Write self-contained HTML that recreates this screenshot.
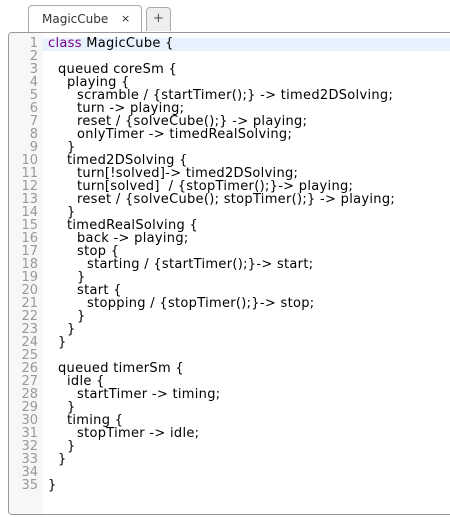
<!DOCTYPE html>
<html><head><style>
html,body{margin:0;padding:0;background:#fff;width:450px;height:517px;overflow:hidden}
body{font-family:"DejaVu Sans","Liberation Sans",sans-serif;position:relative}
.tab{position:absolute;left:28px;top:5px;width:114px;height:28px;box-sizing:border-box;border:1px solid #aaa;border-bottom:none;border-radius:4px 4px 0 0;background:#fff;font-size:12px;color:#333}
.tab span{position:absolute;left:13px;top:6px}
.tab b{position:absolute;left:92px;top:6px;font-weight:normal;font-size:11px}
.plus{position:absolute;left:146px;top:7px;width:25px;height:24px;box-sizing:border-box;border:1px solid #aaa;border-bottom:none;border-radius:4px 4px 0 0;background:#eee;font-size:13px;color:#555;text-align:center;line-height:22px}
.ed{position:absolute;left:8px;top:32px;width:460px;height:483px;box-sizing:border-box;border:1px solid #999;border-radius:4px;background:#fff;overflow:hidden}
.gut{position:absolute;left:0;top:0;width:34px;height:100%;background:#f7f7f7}
.hl{position:absolute;left:34px;top:5px;right:0;height:13px;background:#e8f2ff}
.lines{position:absolute;left:0;top:4px;font-size:13px;line-height:13px;letter-spacing:0.3px}
.l{height:13px;position:relative;white-space:pre;color:#000}
.n{position:absolute;left:0;width:29px;text-align:right;color:#999;letter-spacing:0}
.c{position:absolute;left:39px}
.k{color:#708}
</style></head><body>
<div class="tab"><span>MagicCube</span><b>×</b></div>
<div class="plus">+</div>
<div class="ed"><div class="gut"></div><div class="hl"></div>
<div class="lines">
<div class="l"><span class="n">1</span><span class="c"><span class="k">class</span> MagicCube {</span></div>
<div class="l"><span class="n">2</span></div>
<div class="l"><span class="n">3</span><span class="c" style="left:49px">queued coreSm {</span></div>
<div class="l"><span class="n">4</span><span class="c" style="left:58px">playing {</span></div>
<div class="l"><span class="n">5</span><span class="c" style="left:68px">scramble / {startTimer();} -&gt; timed2DSolving;</span></div>
<div class="l"><span class="n">6</span><span class="c" style="left:68px">turn -&gt; playing;</span></div>
<div class="l"><span class="n">7</span><span class="c" style="left:68px">reset / {solveCube();} -&gt; playing;</span></div>
<div class="l"><span class="n">8</span><span class="c" style="left:68px">onlyTimer -&gt; timedRealSolving;</span></div>
<div class="l"><span class="n">9</span><span class="c" style="left:58px">}</span></div>
<div class="l"><span class="n">10</span><span class="c" style="left:58px">timed2DSolving {</span></div>
<div class="l"><span class="n">11</span><span class="c" style="left:68px">turn[!solved]-&gt; timed2DSolving;</span></div>
<div class="l"><span class="n">12</span><span class="c" style="left:68px">turn[solved]  / {stopTimer();}-&gt; playing;</span></div>
<div class="l"><span class="n">13</span><span class="c" style="left:68px">reset / {solveCube(); stopTimer();} -&gt; playing;</span></div>
<div class="l"><span class="n">14</span><span class="c" style="left:58px">}</span></div>
<div class="l"><span class="n">15</span><span class="c" style="left:58px">timedRealSolving {</span></div>
<div class="l"><span class="n">16</span><span class="c" style="left:68px">back -&gt; playing;</span></div>
<div class="l"><span class="n">17</span><span class="c" style="left:68px">stop {</span></div>
<div class="l"><span class="n">18</span><span class="c" style="left:78px">starting / {startTimer();}-&gt; start;</span></div>
<div class="l"><span class="n">19</span><span class="c" style="left:68px">}</span></div>
<div class="l"><span class="n">20</span><span class="c" style="left:68px">start {</span></div>
<div class="l"><span class="n">21</span><span class="c" style="left:78px">stopping / {stopTimer();}-&gt; stop;</span></div>
<div class="l"><span class="n">22</span><span class="c" style="left:68px">}</span></div>
<div class="l"><span class="n">23</span><span class="c" style="left:58px">}</span></div>
<div class="l"><span class="n">24</span><span class="c" style="left:49px">}</span></div>
<div class="l"><span class="n">25</span></div>
<div class="l"><span class="n">26</span><span class="c" style="left:49px">queued timerSm {</span></div>
<div class="l"><span class="n">27</span><span class="c" style="left:58px">idle {</span></div>
<div class="l"><span class="n">28</span><span class="c" style="left:68px">startTimer -&gt; timing;</span></div>
<div class="l"><span class="n">29</span><span class="c" style="left:58px">}</span></div>
<div class="l"><span class="n">30</span><span class="c" style="left:58px">timing {</span></div>
<div class="l"><span class="n">31</span><span class="c" style="left:68px">stopTimer -&gt; idle;</span></div>
<div class="l"><span class="n">32</span><span class="c" style="left:58px">}</span></div>
<div class="l"><span class="n">33</span><span class="c" style="left:49px">}</span></div>
<div class="l"><span class="n">34</span></div>
<div class="l"><span class="n">35</span><span class="c">}</span></div>
</div></div>
</body></html>
